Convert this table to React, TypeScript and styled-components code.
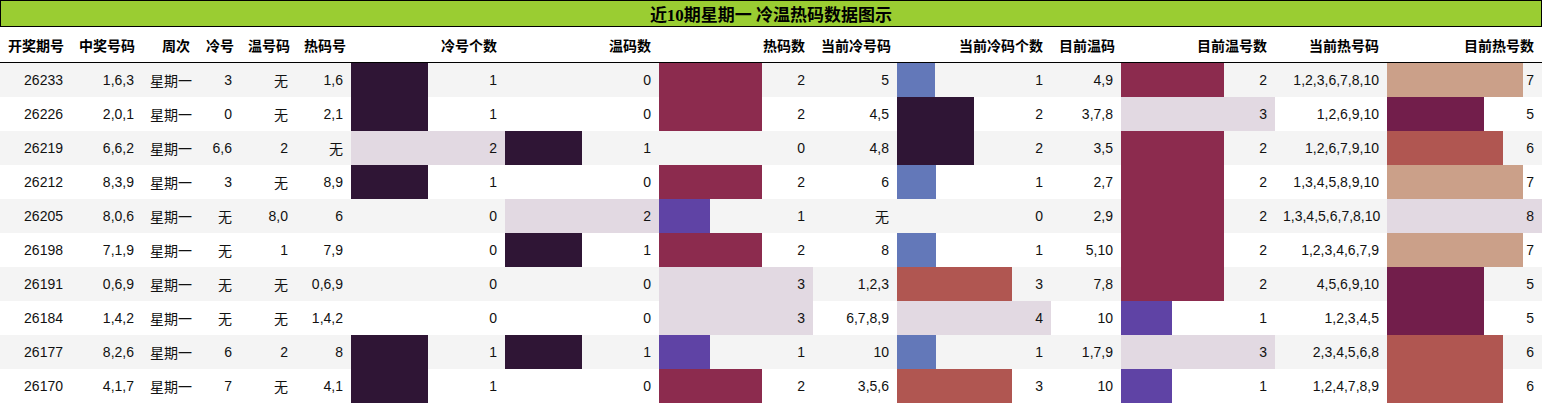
import React from "react";
import styled, { createGlobalStyle } from "styled-components";

const GlobalStyle = createGlobalStyle`
  html, body { margin: 0; padding: 0; background: #ffffff; }
  body { font-family: "Liberation Sans", "Noto Sans CJK SC", sans-serif; }
`;

const Wrapper = styled.div`
  width: 1542px;
  display: flex;
  flex-direction: column;
`;

const Title = styled.div`
  box-sizing: border-box;
  height: 27px;
  border: 1px solid #000;
  background: #9acd32;
  display: flex;
  align-items: center;
  justify-content: center;
  font-family: "Liberation Serif", "Noto Sans CJK SC", serif;
  font-weight: bold;
  font-size: 17px;
  color: #000;
`;

const Table = styled.table`
  width: 1542px;
  table-layout: fixed;
  border-collapse: collapse;
  border-spacing: 0;
  font-size: 14px;
  color: #111;
`;

const HeadCell = styled.th`
  height: 35px;
  padding: 0 8px;
  text-align: right;
  font-weight: bold;
  color: #000;
  white-space: nowrap;
  border-bottom: 1px solid #000;
  font-family: "Liberation Sans", "Noto Sans CJK SC", sans-serif;
`;

const Row = styled.tr<{ $odd: boolean }>`
  background: ${(p) => (p.$odd ? "#f4f4f4" : "#ffffff")};
`;

const Cell = styled.td`
  height: 34px;
  padding: 0 8px;
  text-align: right;
  white-space: nowrap;
  vertical-align: middle;
`;

const BarCell = styled(Cell)<{ $color: string; $pct: number }>`
  background: ${(p) =>
    p.$pct > 0
      ? `linear-gradient(90deg, ${p.$color} ${p.$pct}%, transparent ${p.$pct}%)`
      : "transparent"};
`;

type Col = { title: string; width: number; max?: number };

const columns: Col[] = [
  { title: "开奖期号", width: 71 },
  { title: "中奖号码", width: 71 },
  { title: "周次", width: 56 },
  { title: "冷号", width: 42 },
  { title: "温号码", width: 56 },
  { title: "热码号", width: 55 },
  { title: "冷号个数", width: 154, max: 2 },
  { title: "温码数", width: 154, max: 2 },
  { title: "热码数", width: 154, max: 3 },
  { title: "当前冷号码", width: 84 },
  { title: "当前冷码个数", width: 154, max: 4 },
  { title: "目前温码", width: 70 },
  { title: "目前温号数", width: 154, max: 3 },
  { title: "当前热号码", width: 112 },
  { title: "目前热号数", width: 155, max: 8 },
];

const rows: (string | number)[][] = [
  ["26233", "1,6,3", "星期一", "3", "无", "1,6", 1, 0, 2, "5", 1, "4,9", 2, "1,2,3,6,7,8,10", 7],
  ["26226", "2,0,1", "星期一", "0", "无", "2,1", 1, 0, 2, "4,5", 2, "3,7,8", 3, "1,2,6,9,10", 5],
  ["26219", "6,6,2", "星期一", "6,6", "2", "无", 2, 1, 0, "4,8", 2, "3,5", 2, "1,2,6,7,9,10", 6],
  ["26212", "8,3,9", "星期一", "3", "无", "8,9", 1, 0, 2, "6", 1, "2,7", 2, "1,3,4,5,8,9,10", 7],
  ["26205", "8,0,6", "星期一", "无", "8,0", "6", 0, 2, 1, "无", 0, "2,9", 2, "1,3,4,5,6,7,8,10", 8],
  ["26198", "7,1,9", "星期一", "无", "1", "7,9", 0, 1, 2, "8", 1, "5,10", 2, "1,2,3,4,6,7,9", 7],
  ["26191", "0,6,9", "星期一", "无", "无", "0,6,9", 0, 0, 3, "1,2,3", 3, "7,8", 2, "4,5,6,9,10", 5],
  ["26184", "1,4,2", "星期一", "无", "无", "1,4,2", 0, 0, 3, "6,7,8,9", 4, "10", 1, "1,2,3,4,5", 5],
  ["26177", "8,2,6", "星期一", "6", "2", "8", 1, 1, 1, "10", 1, "1,7,9", 3, "2,3,4,5,6,8", 6],
  ["26170", "4,1,7", "星期一", "7", "无", "4,1", 1, 0, 2, "3,5,6", 3, "10", 1, "1,2,4,7,8,9", 6],
];

// twilight-like colour stops keyed by fraction of column max
const stops: [number, string][] = [
  [0.25, "#6378b9"],
  [0.333, "#5f43a5"],
  [0.5, "#2f1535"],
  [0.625, "#721e4b"],
  [0.667, "#8c2b4e"],
  [0.75, "#b05651"],
  [0.875, "#cba089"],
  [1, "#e2d9e2"],
];

function colorFor(frac: number): string {
  let best = stops[0];
  for (const s of stops) {
    if (Math.abs(s[0] - frac) < Math.abs(best[0] - frac)) best = s;
  }
  return best[1];
}

export default function App() {
  return (
    <Wrapper>
      <GlobalStyle />
      <Title>近10期星期一 冷温热码数据图示</Title>
      <Table>
        <colgroup>
          {columns.map((c) => (
            <col key={c.title} style={{ width: c.width }} />
          ))}
        </colgroup>
        <thead>
          <tr>
            {columns.map((c) => (
              <HeadCell key={c.title}>{c.title}</HeadCell>
            ))}
          </tr>
        </thead>
        <tbody>
          {rows.map((r, i) => (
            <Row key={String(r[0])} $odd={i % 2 === 0}>
              {r.map((v, j) => {
                const col = columns[j];
                if (col.max) {
                  const n = Number(v);
                  const frac = n / col.max;
                  return (
                    <BarCell key={j} $color={colorFor(frac)} $pct={frac * 100}>
                      {v}
                    </BarCell>
                  );
                }
                return <Cell key={j}>{v}</Cell>;
              })}
            </Row>
          ))}
        </tbody>
      </Table>
    </Wrapper>
  );
}
